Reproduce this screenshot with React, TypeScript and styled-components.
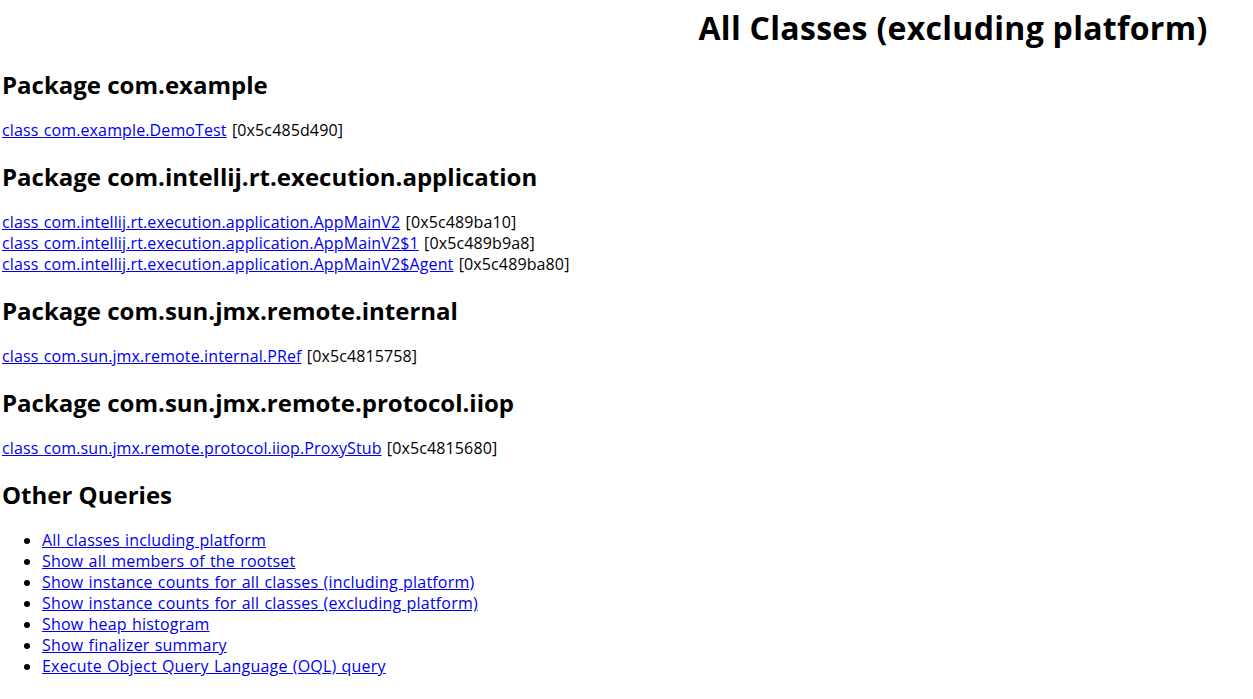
import React from 'react';
import styled, { createGlobalStyle } from 'styled-components';

const GlobalStyle = createGlobalStyle`
  html, body {
    margin: 0;
    padding: 0;
    background: #fff;
  }
  body {
    font-family: "Open Sans", "Noto Sans", sans-serif;
    font-size: 16px;
    color: #000;
  }
`;

interface IClassRef {
  name: string;
  addr: string;
}

interface IPackage {
  name: string;
  classes: IClassRef[];
}

const packages: IPackage[] = [
  {
    name: 'com.example',
    classes: [{ name: 'com.example.DemoTest', addr: '0x5c485d490' }],
  },
  {
    name: 'com.intellij.rt.execution.application',
    classes: [
      { name: 'com.intellij.rt.execution.application.AppMainV2', addr: '0x5c489ba10' },
      { name: 'com.intellij.rt.execution.application.AppMainV2$1', addr: '0x5c489b9a8' },
      { name: 'com.intellij.rt.execution.application.AppMainV2$Agent', addr: '0x5c489ba80' },
    ],
  },
  {
    name: 'com.sun.jmx.remote.internal',
    classes: [{ name: 'com.sun.jmx.remote.internal.PRef', addr: '0x5c4815758' }],
  },
  {
    name: 'com.sun.jmx.remote.protocol.iiop',
    classes: [{ name: 'com.sun.jmx.remote.protocol.iiop.ProxyStub', addr: '0x5c4815680' }],
  },
];

const queries = [
  'All classes including platform',
  'Show all members of the rootset',
  'Show instance counts for all classes (including platform)',
  'Show instance counts for all classes (excluding platform)',
  'Show heap histogram',
  'Show finalizer summary',
  'Execute Object Query Language (OQL) query',
];

export default function App() {
  return (
    <Page>
      <GlobalStyle />
      <Title>All Classes (excluding platform)</Title>
      {packages.map(pkg => (
        <section key={pkg.name}>
          <Heading>Package {pkg.name}</Heading>
          <ClassList>
            {pkg.classes.map(cls => (
              <ClassLine key={cls.name}>
                <Link href="#">class {cls.name}</Link> [{cls.addr}]
              </ClassLine>
            ))}
          </ClassList>
        </section>
      ))}
      <Heading>Other Queries</Heading>
      <QueryList>
        {queries.map(q => (
          <li key={q}>
            <Link href="#">{q}</Link>
          </li>
        ))}
      </QueryList>
    </Page>
  );
}

const Page = styled.div`
  padding: 7px 2px 0 2px;
  overflow: hidden;
`;

const Title = styled.h1`
  margin: 0 0 19.5px 0;
  padding-left: 653px;
  text-align: center;
  font-size: 32px;
  line-height: 42px;
  font-weight: 700;
  letter-spacing: 0.3px;
`;

const Heading = styled.h2`
  margin: 19.5px 0;
  font-size: 24px;
  line-height: 32px;
  font-weight: 700;
`;

const ClassList = styled.div`
  margin: 19.5px 0;
  letter-spacing: 0.12px;
  word-spacing: 1px;
`;

const ClassLine = styled.div`
  line-height: 21px;
`;

const Link = styled.a`
  color: #0000ee;
  text-decoration: underline;
`;

const QueryList = styled.ul`
  margin: 19.5px 0;
  padding-left: 40px;
  line-height: 21px;
  list-style: disc;
  letter-spacing: 0.2px;
  word-spacing: 0.8px;
`;
